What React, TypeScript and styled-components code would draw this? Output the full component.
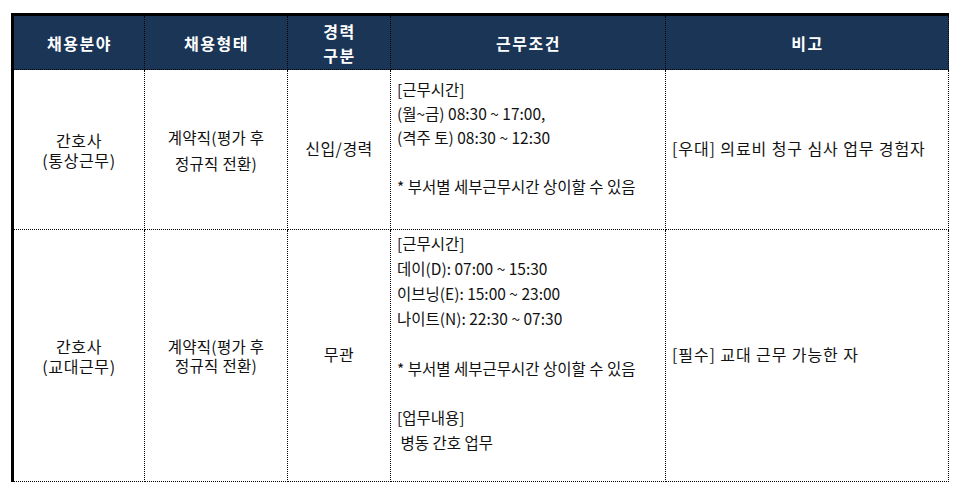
import React from "react";
import styled, { createGlobalStyle } from "styled-components";

const GlobalStyle = createGlobalStyle`
  html, body {
    margin: 0;
    padding: 0;
    background: #ffffff;
  }
  body {
    font-family: "Noto Sans CJK KR", "Noto Sans", sans-serif;
    color: #111111;
  }
`;

const Page = styled.div`
  padding: 13px 0 0 11px;
`;

const Table = styled.table`
  border-collapse: collapse;
  table-layout: fixed;
  width: 936px;
  border-top: 3px solid #000;
  border-left: 3px solid #000;
  border-right: 1px dotted #000;
  border-bottom: 1px dotted #000;
`;

const HeadRow = styled.tr`
  height: 55px;
`;

const BodyRow = styled.tr<{ $h: number }>`
  height: ${(p) => p.$h}px;
`;

const HeadCell = styled.th`
  background: #1b3556;
  color: #ffffff;
  font-weight: 700;
  font-size: 16px;
  letter-spacing: 1.5px;
  line-height: 24px;
  text-align: center;
  vertical-align: middle;
  padding: 0 0 0 1px;
  border: 1px dotted #000;
  border-top: 3px solid #000;
`;

const Cell = styled.td<{
  $align?: "left" | "center";
  $lh?: number;
  $fs?: number;
  $ls?: number;
  $lift?: number;
}>`
  font-size: ${(p) => p.$fs ?? 16}px;
  letter-spacing: ${(p) => p.$ls ?? 0}px;
  line-height: ${(p) => p.$lh ?? 20}px;
  text-align: ${(p) => p.$align ?? "center"};
  vertical-align: middle;
  padding: 0 ${(p) => (p.$align === "left" ? "0" : "4px")}
    ${(p) => (p.$lift ?? 0) * 2}px ${(p) => (p.$align === "left" ? "6px" : "4px")};
  border: 1px dotted #000;
  color: #111111;
  white-space: pre-line;
`;

const Line = styled.div`
  white-space: pre;
`;

type Row = {
  h: number;
  field: string;
  type: string;
  typeLh: number;
  career: string;
  condLh: number;
  conditions: string[];
  note: string;
};

const rows: Row[] = [
  {
    h: 160,
    field: "간호사\n(통상근무)",
    type: "계약직(평가 후\n정규직 전환)",
    typeLh: 26,
    career: "신입/경력",
    condLh: 24.3,
    conditions: [
      "[근무시간]",
      "(월~금) 08:30 ~ 17:00,",
      "(격주 토) 08:30 ~ 12:30",
      "",
      "* 부서별 세부근무시간 상이할 수 있음",
      "",
    ],
    note: "[우대] 의료비 청구 심사 업무 경험자",
  },
  {
    h: 252,
    field: "간호사\n(교대근무)",
    type: "계약직(평가 후\n정규직 전환)",
    typeLh: 19,
    career: "무관",
    condLh: 24.9,
    conditions: [
      "[근무시간]",
      "데이(D): 07:00 ~ 15:30",
      "이브닝(E): 15:00 ~ 23:00",
      "나이트(N): 22:30 ~ 07:30",
      "",
      "* 부서별 세부근무시간 상이할 수 있음",
      "",
      "[업무내용]",
      " 병동 간호 업무",
      "",
    ],
    note: "[필수] 교대 근무 가능한 자",
  },
];

export default function App() {
  return (
    <Page>
      <GlobalStyle />
      <Table>
        <colgroup>
          <col style={{ width: 132 }} />
          <col style={{ width: 143 }} />
          <col style={{ width: 103 }} />
          <col style={{ width: 275 }} />
          <col style={{ width: 283 }} />
        </colgroup>
        <thead>
          <HeadRow>
            <HeadCell>채용분야</HeadCell>
            <HeadCell>채용형태</HeadCell>
            <HeadCell>
              경력
              <br />
              구분
            </HeadCell>
            <HeadCell>근무조건</HeadCell>
            <HeadCell>비고</HeadCell>
          </HeadRow>
        </thead>
        <tbody>
          {rows.map((r, i) => (
            <BodyRow key={i} $h={r.h}>
              <Cell $ls={0.6}>{r.field}</Cell>
              <Cell $fs={15.5} $ls={0.3} $lh={r.typeLh}>
                {r.type}
              </Cell>
              <Cell $ls={0.5} $lift={2}>
                {r.career}
              </Cell>
              <Cell $align="left" $fs={15.5} $lh={r.condLh}>
                {r.conditions.map((c, j) => (
                  <Line key={j}>{c === "" ? "\u00a0" : c}</Line>
                ))}
              </Cell>
              <Cell $align="left" $ls={0.9} $lift={2}>
                {r.note}
              </Cell>
            </BodyRow>
          ))}
        </tbody>
      </Table>
    </Page>
  );
}
